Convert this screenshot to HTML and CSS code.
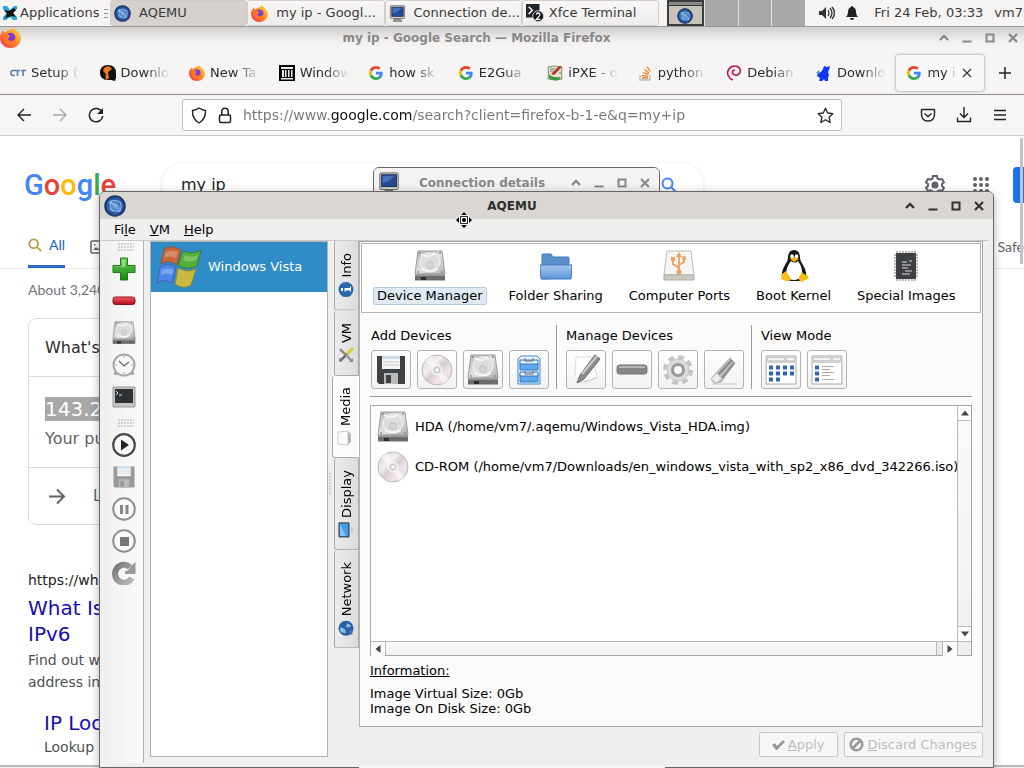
FILE: index.html
```html
<!DOCTYPE html>
<html lang="en">
<head>
<meta charset="utf-8">
<meta name="viewport" content="width=device-width, initial-scale=1">
<title>Desktop</title>
<link rel="stylesheet" href="styles.css">
</head>
<body>
<svg class="defs" aria-hidden="true">
  <defs>
    <linearGradient id="g-metal" x1="0" y1="0" x2="1" y2="1"><stop offset="0" stop-color="#b4b4b4"/><stop offset=".5" stop-color="#e2e2e2"/><stop offset="1" stop-color="#b0b0b0"/></linearGradient>
    <linearGradient id="g-disc" x1="0" y1="0" x2="1" y2="1"><stop offset="0" stop-color="#d8d4d8"/><stop offset=".35" stop-color="#f4eef0"/><stop offset=".5" stop-color="#d6cdd2"/><stop offset=".7" stop-color="#f3e6ea"/><stop offset="1" stop-color="#c9c6cc"/></linearGradient>
    <linearGradient id="g-fox" x1="1" y1="0" x2="0" y2="1"><stop offset="0" stop-color="#ffe14a"/><stop offset=".45" stop-color="#ff9422"/><stop offset="1" stop-color="#f5234f"/></linearGradient>
    <linearGradient id="g-folder" x1="0" y1="0" x2="0" y2="1"><stop offset="0" stop-color="#a9c9ee"/><stop offset="1" stop-color="#5a94d8"/></linearGradient>
    <linearGradient id="g-green" x1="0" y1="0" x2="0" y2="1"><stop offset="0" stop-color="#6fd05c"/><stop offset="1" stop-color="#118a10"/></linearGradient>
    <linearGradient id="g-red" x1="0" y1="0" x2="0" y2="1"><stop offset="0" stop-color="#f0606a"/><stop offset="1" stop-color="#b40916"/></linearGradient>
    <linearGradient id="g-gray" x1="0" y1="0" x2="1" y2="1"><stop offset="0" stop-color="#777"/><stop offset="1" stop-color="#bbb"/></linearGradient>
    <radialGradient id="g-globe"><stop offset="0" stop-color="#6fa2dd"/><stop offset=".7" stop-color="#2f62ab"/><stop offset="1" stop-color="#16386f"/></radialGradient>
  </defs>
  <symbol id="globe" viewBox="0 0 24 24"><circle cx="12" cy="12" r="11" fill="url(#g-globe)" stroke="#1b3563" stroke-width="1.500"/><g fill="none" stroke="#a9cdf5" stroke-width=".9"><path d="M5 8q7-4 13 0M6 9q8-1 12 8M7 7l10 11M6 15q5 3 11 3M8 6q-3 7 2 12M18 8q2 5-1 10"/></g></symbol>
  <symbol id="firefox" viewBox="0 0 24 24"><path d="M12 3c2 0 2-2 3-3 1 3 8 5 9 12 0 7-5 12-12 12S0 19 0 12C0 8 2 6 4 3c0 2 1 3 2 3 2-2 4-3 6-3z" fill="url(#g-fox)"/><circle cx="12" cy="12" r="5.500" fill="#7a3fd0"/><path d="M4 9c3-2 5-1 7 1 1 1 0 2-2 3 1 4 7 4 9-1 1 8-10 11-13 4-1-2-1-5-1-7z" fill="#ff7526"/></symbol>
  <symbol id="google-g" viewBox="0 0 48 48"><path fill="#ea4335" d="M24 9.500c3.500 0 6.700 1.200 9.200 3.600l6.900-6.900C35.900 2.400 30.500 0 24 0 14.600 0 6.500 5.400 2.600 13.200l8 6.200C12.400 13.700 17.700 9.500 24 9.500z"/><path fill="#4285f4" d="M47 24.500c0-1.600-.2-3.100-.4-4.500H24v9h12.900c-.6 3-2.200 5.500-4.700 7.200l7.700 6C44.400 38 47 31.800 47 24.500z"/><path fill="#fbbc05" d="M10.500 28.600a14.500 14.500 0 0 1 0-9.200l-8-6.200a24 24 0 0 0 0 21.600z"/><path fill="#34a853" d="M24 48c6.500 0 11.900-2.100 15.900-5.800l-7.700-6c-2.200 1.500-4.900 2.300-8.200 2.300-6.300 0-11.600-4.200-13.500-9.900l-8 6.200C6.500 42.600 14.600 48 24 48z"/></symbol>
  <symbol id="monitor" viewBox="0 0 24 24"><rect x="2" y="1" width="20" height="18" rx="1" fill="#dcdcdc" stroke="#555"/><rect x="4" y="3" width="16" height="13" fill="#234a93" stroke="#14254d"/><path d="M5 4h14l-8 6-6 2z" fill="#4870b8"/><path d="M8 20h8l2 3H6z" fill="#aaa" stroke="#555"/></symbol>
  <symbol id="hdd" viewBox="0 0 32 32"><path d="M4 1h24l3 23H1z" fill="url(#g-metal)" stroke="#9a9a9a"/><ellipse cx="16" cy="12" rx="10" ry="9" fill="#dedede" stroke="#f3f3f3"/><circle cx="16" cy="15" r="3.500" fill="#d6d6d6" stroke="#c2c2c2"/><path d="M7 4q8 5 14-1M8 19q8 5 16 0" fill="none" stroke="#f8f8f8" stroke-width="1.500"/><g fill="#888"><circle cx="6" cy="3" r="1"/><circle cx="26" cy="3" r="1"/><circle cx="4" cy="22" r="1"/><circle cx="28" cy="22" r="1"/></g><path d="M1 24h30v6.500H1z" fill="#6c6c6c"/><path d="M1 24h30v2H1z" fill="#999"/><path d="M7 27h5v3H7z" fill="#2d2d2d"/></symbol>
  <symbol id="disc" viewBox="0 0 32 32"><circle cx="16" cy="16" r="15" fill="url(#g-disc)" stroke="#bcb8bc"/><path d="M16 16 4 7q3-4 7-5zM16 16l12 9q-3 4-7 5z" fill="#fff" opacity=".55"/><circle cx="16" cy="16" r="5" fill="#e3dfe3" stroke="#fff"/><circle cx="16" cy="16" r="2.500" fill="#fff" stroke="#bbb"/></symbol>
  <symbol id="floppy" viewBox="0 0 32 32"><path d="M2 2h28v28H4l-2-2z" fill="currentColor"/><path d="M7 2h18v13H7z" fill="#f3f5f7"/><path d="M7 2h18v3H7z" fill="#c9dcec"/><path d="M8 8h16M8 11h16" stroke="#ccc"/><path d="M9 19h14v11H9z" fill="#b9b9b9"/><path d="M11 21h5v8h-5z" fill="currentColor"/></symbol>
  <symbol id="search" viewBox="0 0 16 16"><circle cx="6.500" cy="6.500" r="5" fill="none" stroke="currentColor" stroke-width="2"/><path d="m10 10 5 5" stroke="currentColor" stroke-width="2"/></symbol>
  <symbol id="shade" viewBox="0 0 12 12"><path d="m2 8 4-4 4 4" fill="none" stroke="currentColor" stroke-width="2.400"/></symbol>
  <symbol id="minimize" viewBox="0 0 12 12"><path d="M1.500 9.500h9" stroke="currentColor" stroke-width="2"/></symbol>
  <symbol id="maximize" viewBox="0 0 12 12"><rect x="2.500" y="2.500" width="7" height="7" fill="none" stroke="currentColor" stroke-width="2"/></symbol>
  <symbol id="close" viewBox="0 0 12 12"><path d="m2 2 8 8M10 2l-8 8" stroke="currentColor" stroke-width="2.200"/></symbol>
</svg>

<header class="panel">
  <button class="apps"><svg width="16" height="16" viewBox="0 0 16 16"><path d="M1 1h4l3 4 4-4h3v3l-4 4 4 4v3h-4l-3-3-4 3H1v-3l4-4-4-4z" fill="#28a7d8"/><path d="M2 5l5 1 5-3 2 2-3 3 3 4-4-1-3 1-4 1 2-4z" fill="#111"/></svg>Applications<span class="bars"></span></button>
  <nav class="tasks">
    <button class="task active"><svg width="17" height="17"><use href="#globe"/></svg><span>AQEMU</span></button>
    <button class="task"><svg width="17" height="17"><use href="#firefox"/></svg><span>my ip - Googl...</span></button>
    <button class="task"><svg width="17" height="17"><use href="#monitor"/></svg><span>Connection de...</span></button>
    <button class="task"><svg width="18" height="20" viewBox="0 0 20 20"><path d="M0 0h15v15H0z" fill="#20262b"/><path d="m3 3 4 4-4 4" fill="none" stroke="#fff" stroke-width="1.600"/><circle cx="13.500" cy="13.500" r="6" fill="#111" stroke="#ddd"/><path d="M11.500 12q0-2 2-2t2 2q0 1-4 5h4.500" fill="none" stroke="#fff" stroke-width="1.400"/></svg><span>Xfce Terminal</span></button>
  </nav>
  <div class="pager"><span class="desk current"><svg width="16" height="16"><use href="#globe"/></svg></span><span class="desk"></span><span class="desk"></span><span class="desk"></span></div>
  <div class="tray">
    <svg width="16" height="14" viewBox="0 0 16 14"><path d="M0 5h3l4-4v12L3 9H0z" fill="#333"/><path d="M9 4q2 3 0 6M11 2q4 5 0 10M13 1q5 6 0 12" fill="none" stroke="#333" stroke-width="1.300"/></svg>
    <svg width="12" height="14" viewBox="0 0 12 14"><path d="M6 0q1 0 1 1 3 1 3 5 0 3 2 5H0q2-2 2-5 0-4 3-5 0-1 1-1zM4 12h4q0 2-2 2t-2-2z" fill="#222"/></svg>
    <span class="clock">Fri 24 Feb, 03:33</span><span>vm7</span>
  </div>
</header>

<main class="desktop">
  <section class="firefox">
    <div class="ff-title">
      <svg width="21" height="21"><use href="#firefox"/></svg><h2>my ip - Google Search — Mozilla Firefox</h2>
      <div class="controls"><button aria-label="Shade"><svg><use href="#shade"/></svg></button><button aria-label="Minimize"><svg><use href="#minimize"/></svg></button><button aria-label="Maximize"><svg><use href="#maximize"/></svg></button><button aria-label="Close"><svg><use href="#close"/></svg></button></div>
    </div>
    <div class="ff-tabs">
      <div class="tabs">
        <button class="tab"><svg viewBox="0 0 16 16"><path d="M5 5.500H3q-2 0-2 2.500t2 2.500h2M5 5.500h5M7.500 5v6M11 5.500h5M13 5v6" fill="none" stroke="#5b7fa8" stroke-width="1.600"/></svg><span>Setup (</span></button>
        <button class="tab"><svg viewBox="0 0 16 16"><path d="M8 0q8 0 8 8v5l-1 3-4-1q-11 1-11-7 0-8 8-8z" fill="#111"/><path d="M4 3q5-4 8 1l-4 3 1 6-3 2q-1-4 0-6L3 6z" fill="#f07b1c"/></svg><span>Downlo</span></button>
        <button class="tab"><svg><use href="#firefox"/></svg><span>New Ta</span></button>
        <button class="tab"><svg viewBox="0 0 16 16"><path d="M0 0h16v16H0z" fill="#000"/><path d="M2 2h12v2H2zM3 5h2v7H3zM6 5h1.500v7H6zM9 5h1.500v7H9zM12 5h1.500v7H12zM2 13h12v1.500H2z" fill="#eee"/></svg><span>Window</span></button>
        <button class="tab"><svg class="g"><use href="#google-g"/></svg><span>how sk</span></button>
        <button class="tab"><svg class="g"><use href="#google-g"/></svg><span>E2Gua</span></button>
        <button class="tab"><svg viewBox="0 0 16 16"><path d="M1 2q7-2 14 0-1 6 0 12-7 2-14 0 1-6 0-12z" fill="#e9e3d0" stroke="#7c8c68"/><path d="M3 4h5M3 6h3M12 8h2M3 12h2" stroke="#6a7f9a"/><path d="m4 9 8-8 3 1-8 8z" fill="#b5372c"/><path d="M2 9q3 4 12 3l-2 3q-7 1-10-2z" fill="#3c9b3c"/></svg><span>iPXE - o</span></button>
        <button class="tab"><svg viewBox="0 0 16 16"><path d="M3 10v5h10v-5" fill="none" stroke="#bbb" stroke-width="1.400"/><path d="M5 13h6M5 10.500l6 .8M6 7.500l5.500 2.200M7.500 4.500l4.500 3.800M10 1.500l3.300 5" stroke="#f48024" stroke-width="1.300"/></svg><span>python</span></button>
        <button class="tab"><svg viewBox="0 0 16 16"><path d="M7 15C2 13 0 8 3 4c3-4 9-4 11 0 1 4-2 7-5 6-4-1-3-5 0-5" fill="none" stroke="#c4144f" stroke-width="1.600"/></svg><span>Debian</span></button>
        <button class="tab"><svg viewBox="0 0 16 16"><path d="M8 1l3 1 3-1-1 4-1 2 1 3-1 3v3H9l-1-2-2 2H3l1-3-3-2 1-3 3-1 2-3z" fill="#1136f5"/><path d="m4 9-4-1 3-3z" fill="#4b90e8"/></svg><span>Downlo</span></button>
        <button class="tab selected"><svg class="g"><use href="#google-g"/></svg><span>my ip</span><i class="x"><svg viewBox="0 0 10 10"><path d="m1 1 8 8M9 1 1 9" stroke="#333" stroke-width="1.200"/></svg></i></button>
      </div>
      <button class="new" aria-label="New tab"><svg width="12" height="12" viewBox="0 0 12 12"><path d="M6 0v12M0 6h12" stroke="#222" stroke-width="1.500"/></svg></button>
    </div>
    <div class="ff-nav">
      <div class="nav-buttons">
        <button aria-label="Back"><svg viewBox="0 0 16 16"><path d="M15 8H2M8 2 2 8l6 6" fill="none" stroke="#222" stroke-width="1.400"/></svg></button>
        <button aria-label="Forward"><svg viewBox="0 0 16 16"><path d="M1 8h13M8 2l6 6-6 6" fill="none" stroke="#aaa" stroke-width="1.400"/></svg></button>
        <button aria-label="Reload"><svg viewBox="0 0 16 16"><path d="M14 5a6.700 6.700 0 1 0 .7 4" fill="none" stroke="#222" stroke-width="1.500"/><path d="M15 1v6H9z" fill="#222"/></svg></button>
      </div>
      <div class="urlbar">
        <svg width="16" height="17" viewBox="0 0 16 17"><path d="M8 1q3 2 6.500 2.500Q15 12 8 16 1 12 1.500 3.500 5 3 8 1z" fill="none" stroke="#222" stroke-width="1.400"/></svg>
        <svg width="14" height="17" viewBox="0 0 14 17"><rect x="1.500" y="8" width="11" height="7.500" rx="1.500" fill="none" stroke="#222" stroke-width="1.500"/><path d="M3.800 8V4.500q0-3.300 3.200-3.300t3.200 3.300V8" fill="none" stroke="#222" stroke-width="1.500"/></svg>
        <input class="url" aria-label="Address" value="https://www.google.com/search?client=firefox-b-1-e&amp;q=my+ip">
        <svg width="17" height="17" viewBox="0 0 17 17"><path d="m8.500 1.200 2.200 4.800 5.200.6-3.800 3.600 1 5.300-4.600-2.700-4.600 2.700 1-5.300L1.100 6.600 6.300 6z" fill="none" stroke="#222" stroke-width="1.300" stroke-linejoin="round"/></svg>
      </div>
      <div class="nav-end">
        <button aria-label="Pocket"><svg viewBox="0 0 16 16"><path d="M1.500 2.500h13V7q0 7-6.500 7T1.500 7z" fill="none" stroke="#222" stroke-width="1.400" stroke-linejoin="round"/><path d="m4.500 6.500 3.500 3 3.500-3" fill="none" stroke="#222" stroke-width="1.400"/></svg></button>
        <button aria-label="Downloads"><svg viewBox="0 0 16 16"><path d="M8 0v10M4 6.500l4 4 4-4M1.500 10.500v4h13v-4" fill="none" stroke="#222" stroke-width="1.400"/></svg></button>
        <button aria-label="Menu"><svg viewBox="0 0 16 16"><path d="M2 3.500h12M2 8h12M2 12.500h12" stroke="#222" stroke-width="1.300"/></svg></button>
      </div>
    </div>
    <div class="page">
      <div class="g-head">
        <div class="logo"><span class="b">G</span><span class="r">o</span><span class="y">o</span><span class="b">g</span><span class="gr">l</span><span class="r">e</span></div>
        <div class="g-search"><input aria-label="Search" value="my ip"><svg width="16" height="16"><use href="#search"/></svg></div>
        <div class="g-tools">
          <svg width="20" height="20" viewBox="0 0 20 20"><path d="M8 1h4l.5 2.500 2 1L17 4l2 3.300L17 9v2l2 1.700L17 16l-2.500-.7-2 1.200L12 19H8l-.5-2.500-2-1.200L3 16l-2-3.300L3 11V9L1 7.300 3 4l2.500.6 2-1.100z" fill="none" stroke="#5f6368" stroke-width="2"/><circle cx="10" cy="10" r="3.500" fill="#5f6368"/></svg>
          <svg width="16" height="16" viewBox="0 0 16 16"><path d="M2 2v13M8 2v13M14 2v13" stroke="#5f6368" stroke-width="4" stroke-linecap="round" stroke-dasharray="0 6"/></svg>
          <button class="signin" aria-label="Sign in"></button>
        </div>
      </div>
      <nav class="g-nav">
        <a class="on" href="#"><svg width="14" height="14"><use href="#search"/></svg>All</a>
        <a href="#" aria-label="Images"><svg width="14" height="14" viewBox="0 0 14 14"><rect x="1" y="1" width="12" height="12" rx="1" fill="none" stroke="#5f6368" stroke-width="1.500"/><path d="m3 10 3-3 2 2 2-2 2 3zM4 4h1.500v1.500H4z" fill="#5f6368"/></svg></a>
        <a class="safe" href="#">Safe</a>
      </nav>
      <p class="stats">About 3,240</p>
      <div class="card">
        <p class="q">What's</p>
        <div class="answer"><p><mark>143.2</mark></p><p class="sub">Your pu</p></div>
        <p class="more"><svg width="17" height="17" viewBox="0 0 17 17"><path d="M0 8.500h15M8 1.500l7 7-7 7" fill="none" stroke="#5f6368" stroke-width="2"/></svg>L</p>
      </div>
      <article class="result">
        <cite>https://wh</cite>
        <h3><a href="#">What Is<br>IPv6</a></h3>
        <p>Find out w<br>address in</p>
        <div class="sublink"><h3><a href="#">IP Loo</a></h3><p>Lookup</p></div>
      </article>
      <div class="page-thumb"></div>
    </div>
    <div class="ff-edge"></div>
  </section>

  <section class="window details">
    <div class="titlebar"><svg width="22" height="22"><use href="#monitor"/></svg><h2>Connection details</h2>
      <div class="controls"><button aria-label="Shade"><svg><use href="#shade"/></svg></button><button aria-label="Minimize"><svg><use href="#minimize"/></svg></button><button aria-label="Maximize"><svg><use href="#maximize"/></svg></button><button aria-label="Close"><svg><use href="#close"/></svg></button></div></div>
  </section>

  <section class="window aqemu">
    <div class="titlebar"><svg width="22" height="22"><use href="#globe"/></svg><h2>AQEMU</h2>
      <div class="controls"><button aria-label="Shade"><svg><use href="#shade"/></svg></button><button aria-label="Minimize"><svg><use href="#minimize"/></svg></button><button aria-label="Maximize"><svg><use href="#maximize"/></svg></button><button aria-label="Close"><svg><use href="#close"/></svg></button></div></div>
    <nav class="menubar"><button>Fi<u>l</u>e</button><button><u>V</u>M</button><button><u>H</u>elp</button></nav>
    <div class="body">
      <div class="toolbar">
        <span class="grip"></span>
        <button aria-label="Add"><svg viewBox="0 0 24 24"><path d="M8.500 1h7v7.500H23v7h-7.500V23h-7v-7.500H1v-7h7.500z" fill="url(#g-green)" stroke="#1c7a18" stroke-linejoin="round"/><path d="M10 3h3v7H3V9.500h7z" fill="#b5f0a6" opacity=".6"/></svg></button>
        <button aria-label="Remove"><svg viewBox="0 0 24 24"><rect x="1" y="8" width="22" height="7.500" rx="2.500" fill="url(#g-red)" stroke="#8f0c16"/></svg></button>
        <button aria-label="Hard disk"><svg><use href="#hdd"/></svg></button>
        <button aria-label="Clock"><svg viewBox="0 0 24 24"><circle cx="12" cy="12" r="10.500" fill="#f7f7f7" stroke="#a8a8a8" stroke-width="2"/><path d="m7 8 5 5 5-4" fill="none" stroke="#666" stroke-width="1.200"/><path d="M12 3v2M12 19v2M3 12h2M19 12h2" stroke="#aaa"/><path d="m2 19 3-1v4H2zM22 19l-3-1v4h3z" fill="#aaa"/></svg></button>
        <button aria-label="Terminal"><svg viewBox="0 0 24 24"><path d="M1 2h22v20H1z" fill="#c4c4c4" stroke="#999"/><path d="M3 4h18v14H3z" fill="#2e3234"/><path d="m4 6 2 2-2 2M7 10h3" fill="none" stroke="#ddd"/></svg></button>
        <span class="grip low"></span>
        <button aria-label="Start"><svg viewBox="0 0 24 24"><circle cx="12" cy="12" r="10.800" fill="#f8f8f8" stroke="#4a4a4a" stroke-width="2.200"/><path d="M9 6.500 17 12l-8 5.500z" fill="#222"/></svg></button>
        <button aria-label="Save" class="faded"><svg><use href="#floppy"/></svg></button>
        <button aria-label="Pause"><svg viewBox="0 0 24 24"><circle cx="12" cy="12" r="10.800" fill="#f8f8f8" stroke="#8f8f8f" stroke-width="2"/><path d="M8 8h3v9H8zM13.500 8h3v9h-3z" fill="#888"/></svg></button>
        <button aria-label="Stop"><svg viewBox="0 0 24 24"><circle cx="12" cy="12" r="10.800" fill="#f8f8f8" stroke="#8f8f8f" stroke-width="2"/><path d="M8 8h9v9H8z" fill="#777"/></svg></button>
        <button aria-label="Reset"><svg viewBox="0 0 24 24"><path d="M20 17A9 9 0 1 1 18 6" fill="none" stroke="url(#g-gray)" stroke-width="6"/><path d="M23.500 1v12H13v-3q4 0 5-4z" fill="#999"/></svg></button>
      </div>
      <div class="content">
        <div class="work">
          <ul class="vms"><li><svg width="48" height="44" viewBox="0 0 48 44"><path d="M9 4q8-5 17 1l-4 15q-8-6-16-1z" fill="#c9643a" stroke="#7d5a4a"/><path d="M28 6q9 4 18-1l-4 16q-10 5-19-1z" fill="#55b038" stroke="#3c7a35"/><path d="M5 22q8-5 16 0l-4 16q-8-5-15 0z" fill="#4f86ea" stroke="#3e62b0"/><path d="M23 23q9 5 18 1l-5 16q-8 5-16-1z" fill="#c9b93f" stroke="#8c8a38"/><path d="M11 7q7-3 12 0l-2 6q-7-3-12 0zM7 25q7-3 11 0l-1 5q-6-3-11 0zM30 10q7 3 13 0l-2 5q-7 3-13 0z" fill="#fff" opacity=".25"/></svg>Windows Vista</li></ul>
          <span class="splitter"></span>
          <div class="vtabs" role="tablist">
            <button role="tab"><svg viewBox="0 0 16 16"><circle cx="8" cy="8" r="7.500" fill="#2a68ad"/><path d="M6.500 3h3v2h-3zM6 6.500h3.500V12H11v1H6v-1h1V7.500H6z" fill="#fff"/></svg>Info</button>
            <button role="tab"><svg viewBox="0 0 16 16"><path d="m2 2 12 12" stroke="#666" stroke-width="2.500"/><path d="M14 2 7 9" stroke="#888" stroke-width="2.500"/><path d="m8 8-6 6" stroke="#999" stroke-width="2.500"/><path d="M1 1h4v4zM1 15v-4l4 4z" fill="#888"/><path d="m9 9 6 6" stroke="#d8d03a" stroke-width="3"/></svg>VM</button>
            <button role="tab" class="on" aria-selected="true"><svg viewBox="0 0 16 16"><path d="M2 1h12l1 10H1z" fill="#fafafa" stroke="#ccc"/><path d="M1 11h14l-3 3H4z" fill="#b5b5b5"/></svg>Media</button>
            <button role="tab"><svg viewBox="0 0 16 16"><path d="M1 1h14v10H1z" fill="#4b9be2" stroke="#234"/><path d="M2 2h12L2 8z" fill="#83c2f5"/><path d="M5 13h6v2H5z" fill="#ccc"/></svg>Display</button>
            <button role="tab"><svg viewBox="0 0 16 16"><circle cx="8" cy="8" r="7.500" fill="#2b5fa5"/><path d="M4 3q3-2 5 0l-2 4-4 1zM9 8l4 1-2 4-2-1z" fill="#86c2dd"/><path d="m1 14 4-4 1 5z" fill="#5b6fa8"/></svg>Network</button>
          </div>
          <div class="pane">
            <div class="sections">
              <button class="on"><svg><use href="#hdd"/></svg><span>Device Manager</span></button>
              <button><svg viewBox="0 0 32 32"><path d="M2 29V5q0-1 1-1h8l2 3h15q1 0 1 1v20z" fill="#5c8fcd" stroke="#4478b8"/><path d="M0 15h32l-1 14H1z" fill="url(#g-folder)" stroke="#3f77bd"/></svg><span>Folder Sharing</span></button>
              <button><svg viewBox="0 0 32 32"><path d="M4 1h24l3 24H1z" fill="#f8f6f3" stroke="#bbb"/><path d="M1 25h30v5H1z" fill="#cfc9c2" stroke="#aaa"/><path d="M16 23V5M16 18l-6-4v-4M16 15l5-3V8" fill="none" stroke="#eda160" stroke-width="1.800"/><path d="m13 7 3-5 3 5zM8 7h4v4H8z" fill="#eda160"/><circle cx="21" cy="8" r="2" fill="#eda160"/><circle cx="16" cy="22" r="2.500" fill="#eda160"/></svg><span>Computer Ports</span></button>
              <button><svg viewBox="0 0 32 32"><path d="M16 0q6 0 6 8 0 3 3 7 4 7 3 12l-6 4H10l-6-4q-1-5 3-12 3-4 3-7 0-8 6-8z" fill="#161616"/><path d="M13 11q4 3 7 0 5 7 4 14-3 5-8 5t-8-5q0-8 5-14z" fill="#fff"/><ellipse cx="14" cy="6.500" rx="1.800" ry="2.300" fill="#fff"/><ellipse cx="18.500" cy="6.500" rx="1.800" ry="2.300" fill="#fff"/><path d="m12 9 4-2 5 2-5 3z" fill="#f2b50f"/><path d="m8 21 5 8q-1 3-5 2l-5-2 1-5zM24 22q2 3 5 3l2 3-7 4q-4-1-3-5z" fill="#f7bd12"/></svg><span>Boot Kernel</span></button>
              <button><svg viewBox="0 0 32 32"><path d="M7 1v30M10 1v30M13 1v30M16 1v30M19 1v30M22 1v30M25 1v30M4 5h24M4 8h24M4 11h24M4 14h24M4 17h24M4 20h24M4 23h24M4 26h24" stroke="#777"/><rect x="6" y="3" width="20" height="26" rx="1" fill="#3d4042"/><path d="M12 12h5M19 11h3M12 15h9M12 18h6M15 21h7M12 24h8" stroke="#a5a5a5" stroke-width="1.300"/></svg><span>Special Images</span></button>
            </div>
            <div class="media">
              <div class="groups">
                <div class="group"><h4>Add Devices</h4><div class="btns">
                  <button aria-label="Floppy"><svg><use href="#floppy"/></svg></button><button aria-label="CD-ROM"><svg><use href="#disc"/></svg></button><button aria-label="Hard disk"><svg><use href="#hdd"/></svg></button>
                  <button aria-label="Other"><svg viewBox="0 0 32 32"><path d="M8 2h16l3 3v25H5V5z" fill="#eef6fd" stroke="#3c83ca"/><path d="M7 9h18v7H7zM7 20h18v8H7z" fill="#5fa8ec" stroke="#2e77c4"/><path d="M7 6h18v4H7zM7 18h18v4H7z" fill="#e3f1fd" stroke="#2e77c4"/><path d="M12 4v3h8V4M12 17v3h8v-3" fill="none" stroke="#666"/></svg></button></div></div>
                <div class="group"><h4>Manage Devices</h4><div class="btns">
                  <button aria-label="Edit"><svg viewBox="0 0 32 32"><path d="M6 3h16l5 20-13 7-9-8z" fill="#fff" stroke="#ddd"/><path d="M9 29q7-2 18-5" stroke="#ccc"/><path d="m7 29 3-8L25 1l5 4-16 20z" fill="#8d8d8d" stroke="#666"/><path d="m12 20 15-18" stroke="#ccc" stroke-width="2"/></svg></button>
                  <button aria-label="Remove"><svg viewBox="0 0 32 32"><rect x="1" y="11" width="30" height="9" rx="2.500" fill="#868686" stroke="#777"/><path d="M3 13h26" stroke="#b5b5b5" stroke-width="2"/></svg></button>
                  <button aria-label="Settings"><svg viewBox="0 0 32 32"><circle cx="16" cy="16" r="12.500" fill="none" stroke="#c4c4c4" stroke-width="5" stroke-dasharray="5.500 4.300"/><circle cx="16" cy="16" r="11" fill="#dcdcdc" stroke="#c8c8c8"/><circle cx="16" cy="16" r="5.500" fill="#fafafa" stroke="#999" stroke-width="3"/></svg></button>
                  <button aria-label="Clear"><svg viewBox="0 0 32 32"><path d="M4 30h25" stroke="#ddd" stroke-width="2"/><path d="m3 25 3 4 7-1L27 9l-5-5L9 18z" fill="#bdbdbd" stroke="#aaa"/><path d="m11 20 13-14M14 24 26 9" stroke="#888" stroke-width="2"/><path d="m3 25 6-6 5 6-6 4z" fill="#ededed" stroke="#bbb"/></svg></button></div></div>
                <div class="group"><h4>View Mode</h4><div class="btns">
                  <button aria-label="Icons"><svg viewBox="0 0 32 32"><path d="M1 2h30v28H1z" fill="#fff" stroke="#aaa"/><path d="M1 2h30v7H1z" fill="#cfcfcf"/><path d="M3 5h16M22 5h7" stroke="#f3f3f3" stroke-width="2"/><path d="M4 13.500h26M4 19.500h26" stroke="#3566b5" stroke-width="4" stroke-dasharray="4 3"/><path d="M4 25.500h11" stroke="#3566b5" stroke-width="4" stroke-dasharray="4 3"/></svg></button>
                  <button aria-label="List"><svg viewBox="0 0 32 32"><path d="M1 2h30v28H1z" fill="#fff" stroke="#aaa"/><path d="M1 2h30v7H1z" fill="#cfcfcf"/><path d="M3 5h16M22 5h7" stroke="#f3f3f3" stroke-width="2"/><path d="M4 13.500h4M4 19.500h4M4 25.500h4" stroke="#3566b5" stroke-width="4"/><path d="M11 12.500h12M11 15.500h8M11 18.500h12M11 21.500h8M11 25.500h12" stroke="#aaa"/></svg></button></div></div>
              </div>
              <div class="devices">
                <ul><li><svg><use href="#hdd"/></svg>HDA (/home/vm7/.aqemu/Windows_Vista_HDA.img)</li><li><svg><use href="#disc"/></svg>CD-ROM (/home/vm7/Downloads/en_windows_vista_with_sp2_x86_dvd_342266.iso)</li></ul>
                <div class="bar v"><button aria-label="Up"><svg viewBox="0 0 8 5"><path d="m0 5 4-5 4 5z"/></svg></button><span></span><button aria-label="Down"><svg viewBox="0 0 8 5"><path d="m0 0 4 5 4-5z"/></svg></button></div>
                <div class="bar h"><button aria-label="Left"><svg viewBox="0 0 5 8"><path d="M5 0 0 4l5 4z"/></svg></button><span></span><i></i><button aria-label="Right"><svg viewBox="0 0 5 8"><path d="m0 0 5 4-5 4z"/></svg></button></div>
                <div class="corner"></div>
              </div>
              <div class="info"><h4><u>Information:</u></h4><p>Image Virtual Size: 0Gb</p><p>Image On Disk Size: 0Gb</p></div>
            </div>
          </div>
        </div>
        <div class="actions">
          <button disabled><svg width="14" height="14" viewBox="0 0 14 14"><path d="m1 7 3-2 2 3 6-6 2 2-8 8H5z" fill="#999"/></svg><span><u>A</u>pply</span></button>
          <button disabled><svg width="15" height="15" viewBox="0 0 15 15"><circle cx="7.500" cy="7.500" r="5.800" fill="none" stroke="#999" stroke-width="2.600"/><path d="m3.500 11.500 8-8" stroke="#999" stroke-width="2.600"/></svg><span><u>D</u>iscard Changes</span></button>
        </div>
      </div>
    </div>
  </section>
  <div class="dock"></div>
  <svg class="cursor" width="18" height="18" viewBox="0 0 18 18"><path d="m9 0 9 9-9 9-9-9z" fill="#f4f4f4"/><path d="M9 1l3 3H6zM9 17l3-3H6zM1 9l3-3v6zM17 9l-3-3v6z" fill="#000"/><rect x="5.500" y="5.500" width="7" height="7" fill="none" stroke="#333"/><circle cx="9" cy="9" r="2" fill="#000"/></svg>
</main>
</body>
</html>
```
FILE: styles.css
```css
* { box-sizing: border-box; }
body, h2, h3, h4, p, ul { margin: 0; padding: 0; }
body { display: flex; flex-direction: column; height: 100vh; overflow: hidden; font: 13px/16px "DejaVu Sans", sans-serif; color: #111; background: #fff; }
button { font: inherit; color: inherit; background: none; border: 0; padding: 0; margin: 0; display: flex; align-items: center; white-space: nowrap; }
input { font: inherit; border: 0; padding: 0; background: none; min-width: 0; outline: 0; }
h2 { font-size: 12px; }
h4 { font-size: 13px; }
h4, h3 { font-weight: 400; }
ul { list-style: none; }
a { text-decoration: none; color: inherit; }
svg { flex: none; display: block; }
.defs { position: absolute; width: 0; height: 0; }

/* Top panel */
.panel { display: flex; height: 26px; flex: none; background: #f5f4f3; color: #3a3a3a; overflow: hidden; }
.apps { width: 110px; gap: 2px; padding-left: 2px; flex: none; }
.bars { width: 4px; height: 9px; margin-left: 3px; background: repeating-linear-gradient(#999 0 1px, transparent 1px 4px); }
.tasks { display: flex; flex: 0 1 549px; min-width: 0; }
.task { flex: 1; min-width: 0; padding: 0 3px; gap: 8px; border: 1px solid #d2cfcc; border-radius: 3px; background: linear-gradient(#f8f7f6, #efedeb); overflow: hidden; }
.task:last-child { gap: 5px; }
.task.active { background: #d6d1cd; border-color: #d0cbc7; }
.pager { display: flex; gap: 1px; margin-left: 8px; flex: 0 0 138px; background: #e3e3e3; }
.desk { flex: 1; background: #a9a9a9; }
.desk.current { border: 2px solid #3c3c3c; background: linear-gradient(#888 0 3px, #333 3px 4px, #c9c2ba 4px); display: flex; align-items: flex-end; justify-content: center; }
.tray { display: flex; align-items: center; margin-left: auto; padding-right: 1px; gap: 11px; white-space: nowrap; }
.clock { margin-left: 5px; }

/* Firefox */
.desktop { position: relative; flex: 1; min-height: 0; border-top: 1px solid #9a9a9a; }
.firefox { display: flex; flex-direction: column; height: 100%; color: #2b2b2b; }
.ff-title { display: flex; height: 21px; flex: none; align-items: center; background: linear-gradient(#d0cecc, #f0eeec 60%, #f6f5f4); }
.ff-title h2 { flex: 1; text-align: center; color: #888; white-space: nowrap; }
.controls { display: flex; color: #333; }
.controls button { width: 23px; height: 20px; justify-content: center; }
.controls svg { width: 12px; height: 12px; }
.ff-title .controls, .details .controls { color: #888; }
.ff-tabs { display: flex; height: 47px; flex: none; align-items: center; background: #f6f5f4; border-bottom: 1px solid #8f8b88; padding-top: 3px; font-size: 14px; }
.tabs { display: grid; grid-auto-flow: column; grid-auto-columns: minmax(0, 1fr); flex: 1; min-width: 0; height: 38px; }
.tab { min-width: 0; padding: 0 9px 0 10px; gap: 5px; }
.tab > svg { width: 16px; height: 16px; }
.tab > svg.g { width: 14px; height: 14px; margin: 0 1px; }
.tab span { flex: 1; min-width: 0; text-align: left; overflow: hidden; font-size: 13px; mask-image: linear-gradient(90deg, #000 50%, transparent); }
.tab.selected { padding-right: 12px; border: 1px solid #cfccc9; border-radius: 4px; background: #f9f8f8; box-shadow: 0 0 3px #ccc; }
.tab.selected span { mask-image: linear-gradient(90deg, #000 60%, transparent); }
.x svg { width: 10px; height: 10px; }
.new { width: 39px; justify-content: center; }
.ff-nav { display: flex; height: 41px; flex: none; align-items: center; background: #f7f6f5; border-bottom: 1px solid #cbc9c7; }
.nav-buttons, .nav-end { display: flex; }
.nav-buttons { padding-left: 6px; width: 182px; flex: none; }
.nav-end { padding-right: 6px; margin-left: auto; flex: none; }
.nav-buttons button, .nav-end button { width: 36px; height: 32px; justify-content: center; }
.nav-buttons svg, .nav-end svg { width: 16px; height: 16px; }
.urlbar { display: flex; align-items: center; flex: 0 1 660px; height: 32px; padding: 0 7px 0 8px; gap: 11px; border: 1px solid #c0bdba; border-radius: 3px; background: #fff; }
.url { flex: 1; font-size: 14px; color: transparent; background: linear-gradient(90deg, #777 88px, #111 88px 169px, #777 169px); -webkit-background-clip: text; background-clip: text; }
.page { flex: 1; min-height: 0; position: relative; overflow: hidden; background: #fff; white-space: nowrap; }
.g-head { display: flex; align-items: center; padding: 25px 0 0 24px; height: 72px; }
.logo { width: 138px; flex: none; font: 500 29px/36px Roboto, sans-serif; }
.b { color: #4285f4; } .r { color: #ea4335; } .y { color: #fbbc05; } .gr { color: #34a853; }
.g-search { display: flex; align-items: center; flex: 0 1 541px; height: 44px; border-radius: 22px; padding: 0 26px 0 19px; box-shadow: 0 1px 5px #e4e4e4; color: #4285f4; font-size: 16px; }
.g-search input { flex: 1; color: #222; }
.g-tools { display: flex; align-items: center; gap: 28px; margin-left: auto; }
.g-tools svg + svg { margin-right: -4px; }
.signin { width: 11px; height: 36px; background: #1a73e8; border-radius: 4px 0 0 4px; }
.g-nav { display: flex; height: 61px; padding: 17px 0 0 28px; gap: 25px; border-bottom: 1px solid #ebebeb; font: 14px/20px Lato, sans-serif; color: #5f6368; }
.g-nav a { display: flex; align-items: center; gap: 7px; }
.g-nav .on { color: #1a5fc8; border-bottom: 3px solid #2f68c5; }
.g-nav .safe { margin-left: auto; }
.g-nav .on svg { color: #b99a4a; }
.stats { padding: 10px 28px 18px; font: 14px/21px Lato, sans-serif; color: #70757a; }
.card { width: 600px; margin-left: 28px; border: 1px solid #dadce0; border-radius: 8px; font-size: 16px; }
.q { padding: 0 16px; line-height: 57px; border-bottom: 1px solid #dadce0; }
.answer { padding: 18px 16px; border-bottom: 1px solid #dadce0; line-height: 28px; color: #5f6368; height: 91px; }
.answer mark { font-size: 20px; background: #a8a8a8; color: #fff; }
.more { display: flex; align-items: center; padding-left: 20px; height: 56px; gap: 27px; font-size: 15px; color: #5f6368; }
.result { padding: 44px 28px 0; font-size: 14px; line-height: 22px; color: #4d5156; }
.result cite { display: block; font-style: normal; color: #202124; }
.result h3 { font-size: 20px; line-height: 26px; color: #1a0dab; padding: 4px 0 2px; }
.result .sublink { padding: 13px 16px 0; }
.result .sublink h3 { padding-bottom: 0; }
.page-thumb { position: absolute; right: 1px; top: 2px; width: 3px; height: 126px; background: #c3c3c8; }
.ff-edge { flex: none; height: 3px; background: #bbb; border-bottom: 1px solid #eee; }

/* Floating windows */
.window { position: absolute; display: flex; flex-direction: column; border: 1px solid #666; border-radius: 6px 6px 0 0; background: #efefef; color: #000; }
.titlebar { display: flex; align-items: center; padding: 0 3px 0 4px; border-radius: 5px 5px 0 0; background: #dad6d2; height: 27px; flex: none; }
.titlebar h2 { flex: 1; text-align: center; color: #2e2e2e; white-space: nowrap; }
.details { left: 373px; top: 140px; width: 287px; height: 60px; }
.details .titlebar { background: #f4f3f2; height: 29px; }
.details h2 { color: #888; }
.aqemu { left: 99px; top: 164px; right: 30px; bottom: 0; box-shadow: 0 2px 10px rgba(0, 0, 0, .3); }
.menubar { display: flex; height: 22px; flex: none; padding-left: 14px; gap: 14px; background: #efefef; border-bottom: 1px solid #c8c8c8; margin-right: 5px; }
.body { display: flex; flex: 1; min-height: 0; }
.toolbar { display: flex; flex-direction: column; align-items: center; width: 44px; flex: none; margin-bottom: 4px; padding-left: 4px; background: linear-gradient(90deg, #efefef, #fbfbfb); border-right: 1px solid #b0b0b0; }
.toolbar button { height: 32px; }
.toolbar svg { width: 24px; height: 24px; }
.toolbar .faded { color: #999; }
.grip { height: 8px; width: 16px; margin: 2px 0 2px 4px; background: radial-gradient(circle at 1px 1px, #d0d0d0 1px, transparent 1px) 0 0 / 3px 3px; }
.grip.low { margin: 6px 0 2px 4px; }
.content { display: flex; flex-direction: column; flex: 1; min-width: 0; padding: 0 10px 10px 6px; }
.work { display: flex; flex: 1; min-height: 0; }
.vms { width: 178px; flex: none; border: 1px solid #b2b2b2; background: #fff; margin-bottom: -30px; }
.vms li { display: flex; align-items: center; gap: 5px; height: 50px; padding-left: 4px; background: #308cc6; color: #fff; }
.splitter { width: 4px; flex: none; height: 22px; align-self: center; background: radial-gradient(circle at 1px 1px, #ccc 1px, transparent 1px) 1px 0 / 3px 3px; }
.vtabs { display: flex; flex-direction: column; align-items: flex-end; width: 27px; flex: none; }
.vtabs button { writing-mode: vertical-rl; transform: rotate(180deg); width: 25px; padding: 12px 0; gap: 4px; border: 1px solid #aaa; border-bottom-width: 0; border-radius: 0 3px 3px 0; background: linear-gradient(90deg, #dcdcdc, #ececec); }
.vtabs button.on { width: 27px; padding: 11px 0 11px; background: #fcfcfc; border-left-color: #fcfcfc; }
.vtabs button.on ~ button { padding-top: 11px; }
.vtabs svg { width: 16px; height: 16px; transform: rotate(90deg); }
.pane { display: flex; flex-direction: column; flex: 1; min-width: 0; border: 1px solid #a6a6a6; border-left-color: #b5b5b5; background: #fbfbfb; padding: 1px; }
.sections { display: flex; flex: none; gap: 18px; height: 70px; padding: 6px 11px; border: 1px solid #b5b5b5; background: #fff; }
.sections button { flex-direction: column; gap: 5px; height: 55px; }
.sections svg { width: 32px; height: 32px; }
.sections span { padding: 0 3px; border: 1px solid transparent; border-radius: 2px; }
.sections .on span { background: #dfeaf4; border-color: #b4cbe0; }
.media { display: flex; flex-direction: column; flex: 1; min-height: 0; padding: 12px 9px 9px; }
.groups { display: flex; gap: 7px; padding-bottom: 7px; border-bottom: 1px solid #999; }
.group + .group { border-left: 1px solid #999; padding-left: 9px; }
.group h4 { padding: 3px 0 6px; }
.group:first-child { padding-left: 1px; }
.btns { display: flex; gap: 6px; }
.btns button { width: 40px; height: 39px; justify-content: center; border: 1px solid #b3b3b3; border-radius: 3px; background: linear-gradient(#fff, #f2f2f2); color: #3f4245; }
.btns svg { width: 32px; height: 32px; }
.devices { display: grid; grid-template: minmax(0, 1fr) 14px / minmax(0, 1fr) 14px; flex: 1; min-height: 0; margin: 8px 0 7px; border: 1px solid #a6a6a6; background: #fff; }
.devices ul { padding: 5px 0 0 6px; overflow: hidden; white-space: nowrap; }
.devices li { display: flex; align-items: center; gap: 6px; height: 32px; margin-bottom: 8px; }
.devices li svg { width: 32px; height: 32px; }
.bar { display: flex; background: linear-gradient(#fafafa, #f0f0f0); }
.bar button { width: 14px; height: 14px; flex: none; justify-content: center; background: #fdfdfd; }
.bar span { flex: 1; border: 0 solid #b8b8b8; }
.bar svg { width: 8px; height: 8px; fill: #444; }
.bar.v { flex-direction: column; border-left: 1px solid #b8b8b8; }
.bar.v span { border-width: 1px 0; }
.bar.v button { width: 13px; }
.bar.h { border-top: 1px solid #b8b8b8; }
.bar.h span { border-width: 0 1px; }
.bar.h i { width: 6px; background: #e9e9e9; border-right: 1px solid #b8b8b8; }
.corner { background: #efefef; border: 0 solid #b8b8b8; border-width: 1px 0 0 1px; }
.info { line-height: 15px; }
.info h4 { padding-bottom: 8px; }
.actions { display: flex; justify-content: flex-end; gap: 6px; flex: none; padding-top: 5px; }
.actions button { height: 25px; padding: 0 5px 0 4px; gap: 3px; color: #bdbdbd; border: 1px solid #c8c8c8; border-radius: 2px; background: #f7f7f7; }
.actions button:first-child { padding: 0 13px 0 11px; }
.dock { position: absolute; bottom: 0; left: 50%; width: 306px; margin-left: -153px; height: 2px; background: #f7f7f7; }
.cursor { position: absolute; left: 455px; top: 184px; }
```
